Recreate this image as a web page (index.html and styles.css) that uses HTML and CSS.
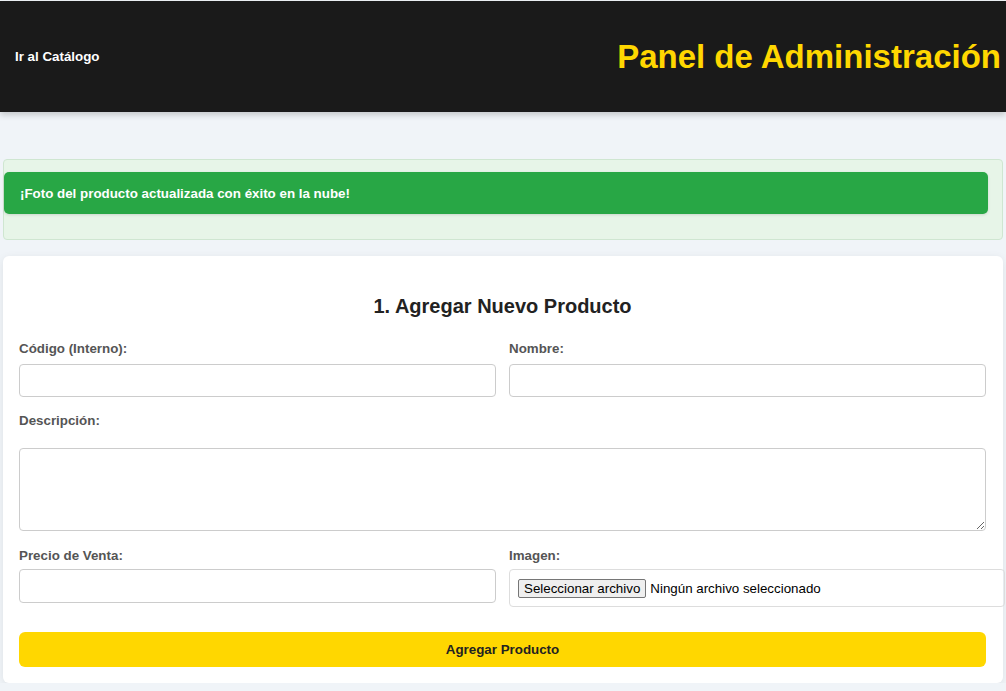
FILE: index.html
```html
<!DOCTYPE html>
<html lang="es">
<head>
<meta charset="utf-8">
<title>Panel de Administración</title>
<link rel="stylesheet" href="styles.css">
</head>
<body>
<header class="topbar">
  <a class="nav-link" href="#">Ir al Catálogo</a>
  <h1 class="brand">Panel de Administración</h1>
</header>
<main class="main">
  <div class="alert-wrap">
    <div class="alert">¡Foto del producto actualizada con éxito en la nube!</div>
  </div>
  <section class="card">
    <h2 class="card-title">1. Agregar Nuevo Producto</h2>
    <div class="row">
      <div class="field">
        <label class="label">Código (Interno):</label>
        <input class="input" type="text">
      </div>
      <div class="field">
        <label class="label">Nombre:</label>
        <input class="input" type="text">
      </div>
    </div>
    <div class="field field-desc">
      <label class="label label-desc">Descripción:</label>
      <textarea class="textarea"></textarea>
    </div>
    <div class="row row-bottom">
      <div class="field">
        <label class="label">Precio de Venta:</label>
        <input class="input input-price" type="text">
      </div>
      <div class="field">
        <label class="label">Imagen:</label>
        <div class="file-box"><span class="file-btn">Seleccionar archivo</span><span class="file-text">Ningún archivo seleccionado</span></div>
      </div>
    </div>
    <button class="submit" type="button">Agregar Producto</button>
  </section>
</main>
</body>
</html>
```

FILE: styles.css
```css
* { box-sizing: border-box; }
html, body { margin: 0; padding: 0; }
body {
  background: #f0f4f8;
  font-family: "Liberation Sans", Arial, sans-serif;
  color: #222;
  padding-top: 1px;
}
.topbar {
  height: 111px;
  background: #1a1a1a;
  display: flex;
  align-items: center;
  justify-content: space-between;
  padding: 0 5px 0 15px;
  box-shadow: 0 3px 6px rgba(0,0,0,0.18);
}
.nav-link {
  color: #fff;
  font-weight: bold;
  font-size: 13.35px;
  text-decoration: none;
}
.brand {
  margin: 0;
  color: #ffd700;
  font-size: 33px;
  font-weight: bold;
}
.main {
  padding: 47px 3px 0 3px;
}
.alert-wrap {
  background: #e7f5e8;
  border: 1px solid #cfe6d1;
  border-radius: 4px;
  padding: 12px 14px 25px 0;
}
.alert {
  background: #28a745;
  color: #fff;
  font-weight: bold;
  font-size: 13.35px;
  height: 42px;
  display: flex;
  align-items: center;
  padding-left: 16px;
  border-radius: 5px;
  box-shadow: 0 1px 3px rgba(0,0,0,0.12);
}
.card {
  margin-top: 16px;
  background: #fff;
  border-radius: 6px;
  box-shadow: 0 2px 8px rgba(0,0,0,0.08);
  padding: 39px 17px 16px 16px;
}
.card-title {
  margin: 0 0 23px 0;
  text-align: center;
  font-size: 20px;
  line-height: 23px;
  color: #222;
}
.row {
  display: grid;
  grid-template-columns: 1fr 1fr;
  gap: 13px;
}
.field {
  display: flex;
  flex-direction: column;
  min-width: 0;
}
.label {
  font-size: 13.35px;
  font-weight: bold;
  color: #555;
  line-height: 15px;
  margin-bottom: 8px;
}
.input {
  height: 33px;
  border: 1px solid #ccc;
  border-radius: 4px;
  padding: 8px;
  font: inherit;
  width: 100%;
}
.field-desc { margin-top: 16px; }
.label-desc { margin-bottom: 20px; }
.textarea {
  height: 83px;
  border: 1px solid #ccc;
  border-radius: 4px;
  width: 100%;
  padding: 8px;
  font: inherit;
  resize: vertical;
  display: block;
}
.row-bottom { margin-top: 17px; }
.row-bottom .label { margin-bottom: 6px; }
.input-price { height: 34px; }
.file-box {
  width: 496px;
  height: 38px;
  border: 1px solid #ddd;
  border-radius: 4px;
  display: flex;
  align-items: center;
  padding: 0 8px;
  font-size: 13.333px;
  color: #000;
  white-space: nowrap;
}
.file-btn {
  background: #efefef;
  border: 1px solid #767676;
  border-radius: 2px;
  padding: 1px 5px;
  margin-right: 4px;
  line-height: 15px;
}
.submit {
  margin-top: 25px;
  width: 100%;
  height: 35px;
  background: #ffd700;
  border: none;
  border-radius: 6px;
  font: inherit;
  font-weight: bold;
  font-size: 13.35px;
  color: #222;
}
```
